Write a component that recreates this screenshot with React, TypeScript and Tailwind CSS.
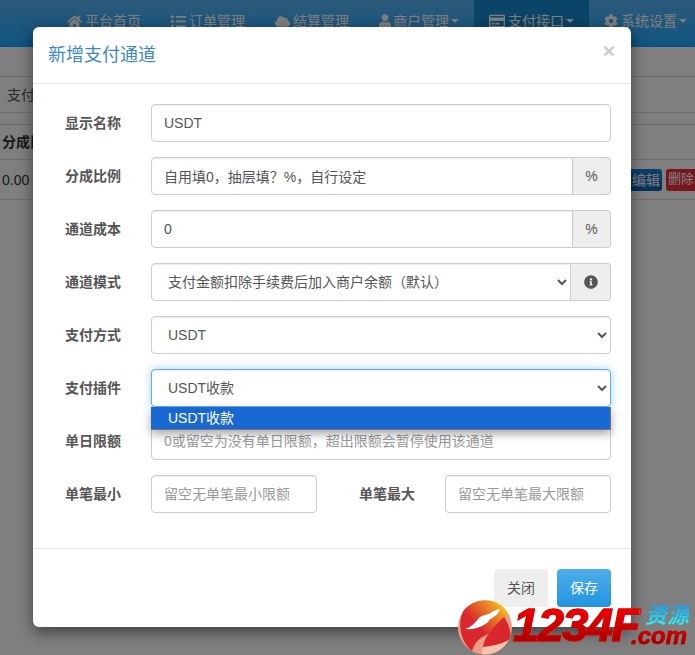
import { FaHome, FaList, FaCloud, FaUser, FaRegCreditCard, FaCog, FaInfoCircle } from "react-icons/fa";
import type { ReactNode } from "react";

const NAV = [
  { label: "平台首页", icon: <FaHome className="mr-[3px] h-[15px] w-[15px]" /> },
  { label: "订单管理", icon: <FaList className="mr-[3px] h-[15px] w-[15px]" /> },
  { label: "结算管理", icon: <FaCloud className="mr-[3px] h-[15px] w-[15px]" /> },
  { label: "商户管理", icon: <FaUser className="mr-[2px] h-[14px] w-[12px]" />, caret: true },
  { label: "支付接口", icon: <FaRegCreditCard className="mr-[3px] h-[16px] w-[16px]" />, caret: true, active: true },
  { label: "系统设置", icon: <FaCog className="mr-[3px] h-[14px] w-[14px]" />, caret: true },
];

const inputCls =
  "h-[38px] min-w-0 flex-1 border border-[#ccc] bg-white px-3 text-sm text-[#555] placeholder:text-[#999] outline-none shadow-[inset_0_1px_1px_rgba(0,0,0,0.075)]";
const selectCls =
  "h-[38px] min-w-0 flex-1 border border-[#ccc] bg-white px-3 text-sm text-[#555] outline-none shadow-[inset_0_1px_1px_rgba(0,0,0,0.075)]";
const addonCls =
  "flex h-[38px] items-center justify-center rounded-r border border-l-0 border-[#ccc] bg-[#eee] text-sm text-[#555]";

function Row({ label, children }: { label: string; children: ReactNode }) {
  return (
    <div className="mb-[15px] flex h-[38px] items-center">
      <label className="w-[98px] shrink-0 pl-3 text-sm font-bold text-[#555]">{label}</label>
      {children}
    </div>
  );
}

function Watermark() {
  return (
    <div className="absolute bottom-0 right-0 h-[55px] w-[237px]">
      <svg viewBox="0 0 54 55" className="absolute left-0 top-0 h-[55px] w-[54px]">
        <defs>
          <linearGradient id="wmTop" x1="0" y1="1" x2="1" y2="0">
            <stop offset="0.42" stopColor="#d9272e" />
            <stop offset="0.8" stopColor="#ee9a22" />
            <stop offset="0.95" stopColor="#ffe600" />
          </linearGradient>
        </defs>
        <circle cx="27" cy="27.5" r="27" fill="#ee9c84" />
        <path d="M27 54.5C38 54.5 47 48 52 38C44 43 36 45 27 46C24 48 23 51 24 54.3Z" fill="#f6c4ae" />
        <path d="M5 11.5A27 27 0 0 1 50 13C46 24 36 32 26 36C20 39 16 44 14 51C3 42 -1 25 5 11.5Z" fill="url(#wmTop)" />
        <path d="M25 47C26 38 33 29 46 17C52 26 54 35 51 40C43 44 34 46 25 47Z" fill="#d9272e" />
        <path d="M7 29C13 27 17 23 21 18C25 14 29 16 34 12C37 10 40 9 42 9C41 13 37 17 32 19C29 25 19 30 7 29Z" fill="#fff" />
      </svg>
      <span className="absolute left-[55px] top-[5px] bg-gradient-to-b from-[#ff0000] to-[#a00000] bg-clip-text font-['Liberation_Sans',sans-serif] text-[47px] font-bold italic leading-[40px] tracking-[-1.5px] text-transparent [-webkit-text-stroke:1px_#d80000]">
        1234F
      </span>
      <span className="absolute left-[187px] top-[1px] bg-gradient-to-b from-[#1a8cf0] to-[#30f4f4] bg-clip-text font-['Noto_Sans_CJK_SC',sans-serif] text-[22px] font-bold italic leading-[24px] text-transparent">
        资源
      </span>
      <span className="absolute left-[173px] top-[21px] bg-gradient-to-b from-[#f00000] to-[#900000] bg-clip-text font-['Liberation_Sans',sans-serif] text-[24px] font-bold italic leading-[30px] text-transparent [-webkit-text-stroke:0.5px_#c00000]">
        .com
      </span>
    </div>
  );
}

export default function App() {
  return (
    <div className="relative h-[655px] w-full overflow-hidden bg-white font-['Liberation_Sans','Noto_Sans_CJK_SC',sans-serif] text-sm">
      {/* page behind the dialog */}
      <nav className="flex h-[47px] items-stretch overflow-hidden bg-gradient-to-b from-[#56b4f6] to-[#18a8ff] pl-[52px]">
        {NAV.map((item) => (
          <div
            key={item.label}
            className={
              item.active
                ? "flex shrink-0 items-center bg-[#1488d0] px-[15px] pb-[5px] text-white"
                : "flex shrink-0 items-center px-[15px] pb-[5px] text-white"
            }
          >
            {item.icon}
            <span>{item.label}</span>
            {item.caret && <span className="ml-[2px] h-0 w-0 border-x-[4px] border-t-[4px] border-x-transparent border-t-white" />}
          </div>
        ))}
      </nav>
      <div className="mt-[29px] flex h-[37px] items-center border-y border-[#ddd] pl-[7px] text-[#555]">支付方式</div>
      <div className="mt-[11px] flex h-[36px] items-center border-y border-[#ddd] pl-[2px] font-bold text-[#333]">分成比例</div>
      <div className="flex h-[40px] items-center justify-between border-b border-[#ddd] pl-[2px] text-[#333]">
        <span>0.00</span>
        <div className="flex gap-[4px]">
          <span className="flex h-[22px] w-[36px] items-center justify-end rounded-[3px] bg-gradient-to-b from-[#1a80dc] to-[#0a64b0] pr-[2px] text-sm whitespace-nowrap text-white">编辑</span>
          <span className="flex h-[22px] w-[29px] items-center rounded-l-[3px] bg-[#f02c3c] pl-[2px] text-[13px] whitespace-nowrap text-white">删除</span>
        </div>
      </div>

      {/* backdrop */}
      <div className="absolute inset-0 bg-black/50" />

      {/* dialog */}
      <div className="absolute left-[33px] top-[27px] h-[600px] w-[598px] rounded-md bg-white shadow-[0_5px_15px_rgba(0,0,0,0.5)]">
        <div className="flex h-[57px] items-center justify-between border-b border-[#e5e5e5] pl-[15px] pr-[16px]">
          <h4 className="text-lg leading-none text-[#3f88bd]">新增支付通道</h4>
          <span className="-mt-[9px] text-[21px] font-bold leading-none text-[#ccc]">×</span>
        </div>

        <div className="px-5 pb-5 pt-5">
          <Row label="显示名称">
            <input className={`${inputCls} rounded`} defaultValue="USDT" />
          </Row>
          <Row label="分成比例">
            <input className={`${inputCls} rounded-l`} defaultValue="自用填0，抽层填？%，自行设定" />
            <span className={`${addonCls} w-[38px]`}>%</span>
          </Row>
          <Row label="通道成本">
            <input className={`${inputCls} rounded-l`} defaultValue="0" />
            <span className={`${addonCls} w-[38px]`}>%</span>
          </Row>
          <Row label="通道模式">
            <select className={`${selectCls} rounded-l`} defaultValue="a">
              <option value="a">支付金额扣除手续费后加入商户余额（默认）</option>
            </select>
            <span className={`${addonCls} w-[40px]`}>
              <FaInfoCircle className="h-[14px] w-[14px]" />
            </span>
          </Row>
          <Row label="支付方式">
            <select className={`${selectCls} rounded`} defaultValue="usdt">
              <option value="usdt">USDT</option>
            </select>
          </Row>
          <Row label="支付插件">
            <div className="relative flex min-w-0 flex-1">
              <select
                className="h-[38px] min-w-0 flex-1 rounded border border-[#66afe9] bg-white px-3 text-sm text-[#555] outline-none shadow-[inset_0_1px_1px_rgba(0,0,0,0.075),0_0_8px_rgba(102,175,233,0.6)]"
                defaultValue="usdt"
              >
                <option value="usdt">USDT收款</option>
              </select>
              {/* open native dropdown list */}
              <div className="absolute left-0 right-0 top-[38px] z-10 flex h-[23px] items-center border-b border-r border-[#767676] bg-[#1967d2] pl-[17px] text-sm text-white shadow-[0_4px_10px_rgba(0,0,0,0.35)]">
                USDT收款
              </div>
            </div>
          </Row>
          <Row label="单日限额">
            <input className={`${inputCls} rounded`} placeholder="0或留空为没有单日限额，超出限额会暂停使用该通道" />
          </Row>
          <Row label="单笔最小">
            <input className={`${inputCls} w-[166px] flex-none rounded`} placeholder="留空无单笔最小限额" />
            <label className="w-[128px] shrink-0 pl-[42px] text-sm font-bold text-[#555]">单笔最大</label>
            <input className={`${inputCls} w-[166px] flex-none rounded`} placeholder="留空无单笔最大限额" />
          </Row>
        </div>

        <div className="flex justify-end gap-[9px] border-t border-[#e5e5e5] px-5 pb-5 pt-5">
          <button className="h-[38px] w-[54px] rounded bg-[#eee] text-sm text-[#555]">关闭</button>
          <button className="h-[38px] w-[54px] rounded bg-gradient-to-b from-[#4dade9] to-[#1f94e2] text-sm text-white">保存</button>
        </div>
      </div>

      <Watermark />
    </div>
  );
}
